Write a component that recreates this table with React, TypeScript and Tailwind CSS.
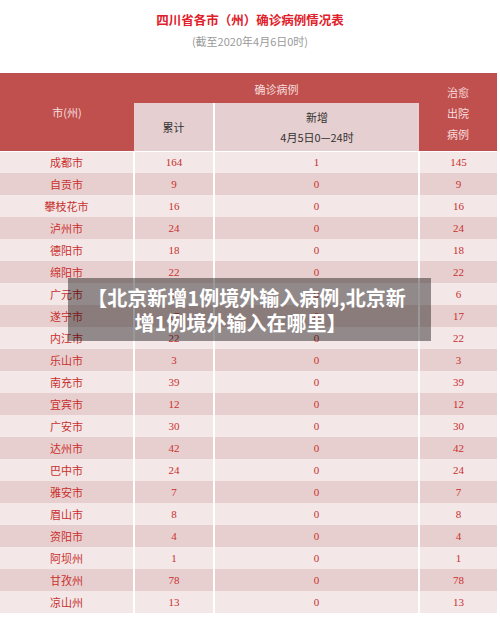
import React from "react";

const rows: [string, string, string, string][] = [
  ["成都市", "164", "1", "145"],
  ["自贡市", "9", "0", "9"],
  ["攀枝花市", "16", "0", "16"],
  ["泸州市", "24", "0", "24"],
  ["德阳市", "18", "0", "18"],
  ["绵阳市", "22", "0", "22"],
  ["广元市", "6", "0", "6"],
  ["遂宁市", "17", "0", "17"],
  ["内江市", "22", "0", "22"],
  ["乐山市", "3", "0", "3"],
  ["南充市", "39", "0", "39"],
  ["宜宾市", "12", "0", "12"],
  ["广安市", "30", "0", "30"],
  ["达州市", "42", "0", "42"],
  ["巴中市", "24", "0", "24"],
  ["雅安市", "7", "0", "7"],
  ["眉山市", "8", "0", "8"],
  ["资阳市", "4", "0", "4"],
  ["阿坝州", "1", "0", "1"],
  ["甘孜州", "78", "0", "78"],
  ["凉山州", "13", "0", "13"],
];

const cjk = { fontFamily: '"Noto Sans CJK SC", "Noto Sans", sans-serif' };
const serif = { fontFamily: '"Liberation Serif", "Noto Sans CJK SC", serif' };

export default function App() {
  return (
    <div className="relative w-[500px] h-[619px] bg-white overflow-hidden" style={cjk}>
      <div className="flex flex-col items-center pt-[11px]">
        <div className="text-[12.5px] leading-[18px] font-bold text-[#e0202a]">四川省各市（州）确诊病例情况表</div>
        <div className="mt-[5px] text-[11px] leading-[14px] text-[#9a9a9a]">(截至2020年4月6日0时)</div>
      </div>
      <table className="mt-[25px] w-[497px] border-collapse table-fixed">
        <colgroup>
          <col className="w-[134px]" />
          <col className="w-[80px]" />
          <col className="w-[205px]" />
          <col className="w-[78px]" />
        </colgroup>
        <thead>
          <tr className="h-[30px]">
            <th rowSpan={2} className="bg-[#c0504d] text-[#f6dede] text-[11px] font-normal">市(州)</th>
            <th colSpan={2} className="bg-[#c0504d] text-[#f6dede] text-[11px] font-normal pt-[2px]">确诊病例</th>
            <th rowSpan={2} className="bg-[#c0504d] text-[#f6dede] text-[11px] font-normal leading-[21px] pt-[4px]">
              治愈<br />出院<br />病例
            </th>
          </tr>
          <tr className="h-[48px]">
            <th className="bg-[#e6cfd0] text-[#333] text-[11px] font-normal border-r-2 border-white">累计</th>
            <th className="bg-[#e6cfd0] text-[#333] text-[11px] font-normal leading-[20px]">
              新增<br />4月5日0—24时
            </th>
          </tr>
        </thead>
        <tbody>
          {rows.map((r, i) => {
            const bg = i % 2 === 0 ? "bg-[#f3e7e7]" : "bg-[#e8cfcf]";
            return (
              <tr key={r[0]} className={`h-[22px] ${bg} ${i === 0 ? "border-t border-white" : ""}`}>
                <td className="text-center text-[11px] text-[#c8302e] border-r-2 border-white" style={cjk}>{r[0]}</td>
                <td className="text-center text-[11px] text-[#c8302e] border-r-2 border-white" style={serif}>{r[1]}</td>
                <td className="text-center text-[11px] text-[#c8302e] border-r-2 border-white" style={serif}>{r[2]}</td>
                <td className="text-center text-[11px] text-[#c8302e]" style={serif}>{r[3]}</td>
              </tr>
            );
          })}
        </tbody>
      </table>
      <div className="absolute left-[68px] top-[278px] w-[363px] h-[63px] bg-black/40 flex flex-col items-center justify-center text-white font-bold text-[20px] leading-[25px]" style={cjk}>
        <div className="pr-[6px]">【北京新增1例境外输入病例,北京新</div>
        <div className="pr-[18px]">增1例境外输入在哪里】</div>
      </div>
    </div>
  );
}
